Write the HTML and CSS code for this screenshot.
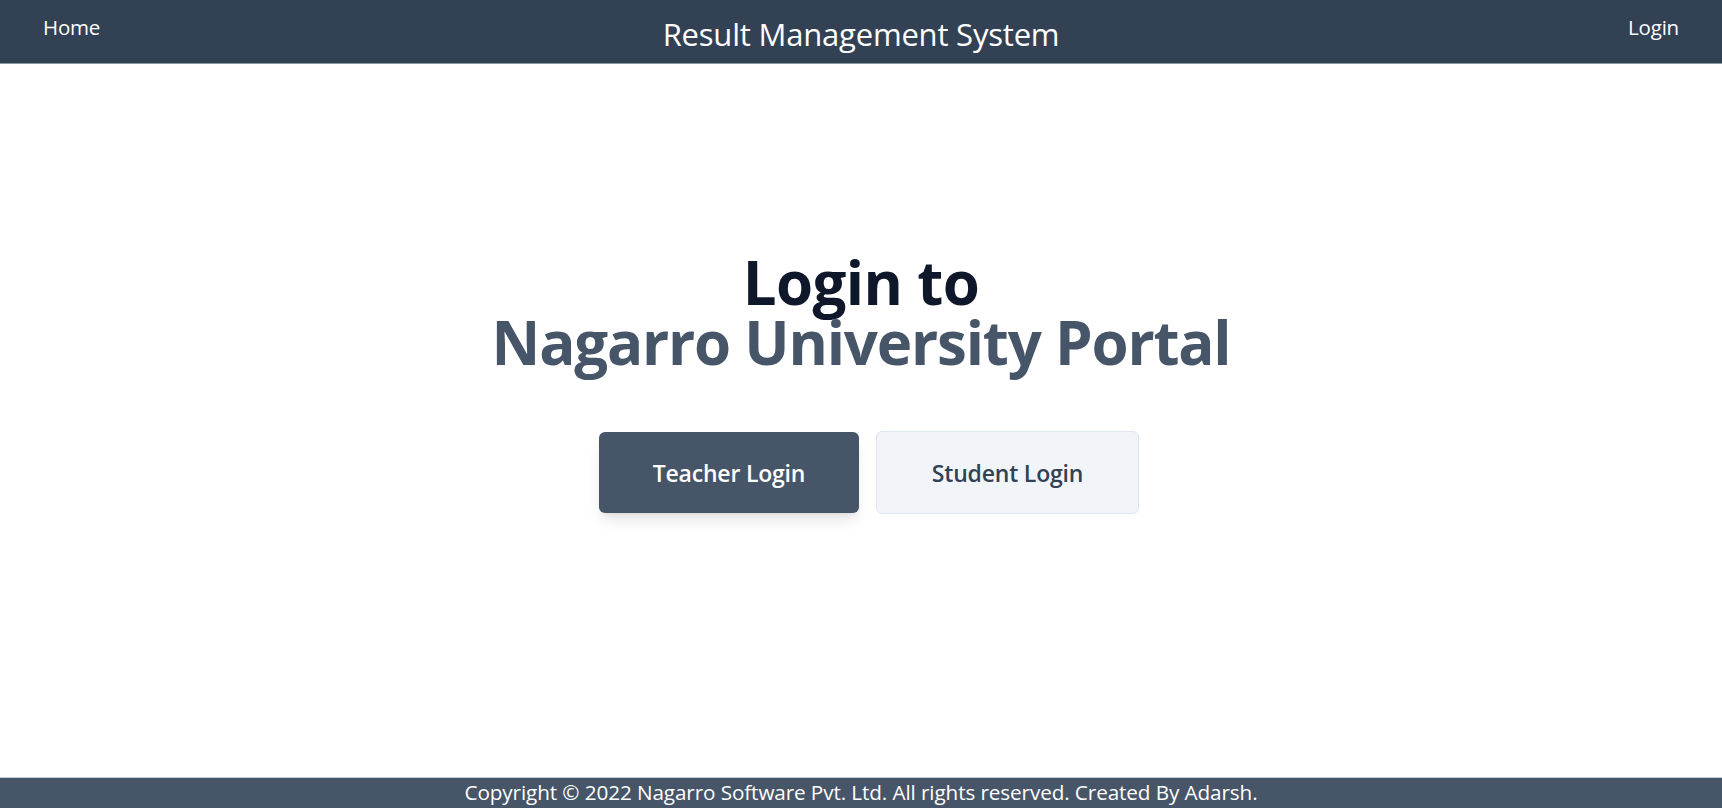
FILE: index.html
```html
<!DOCTYPE html>
<html lang="en">
<head>
<meta charset="utf-8">
<title>Result Management System</title>
<link rel="stylesheet" href="styles.css">
</head>
<body>
<div class="page">
  <header class="topbar">
    <a class="nav-link nav-left" href="#">Home</a>
    <div class="brand">Result Management System</div>
    <a class="nav-link nav-right" href="#">Login</a>
  </header>
  <main class="hero">
    <h1 class="hero-title">
      <span class="hero-line1">Login to</span>
      <span class="hero-line2">Nagarro University Portal</span>
    </h1>
    <div class="actions">
      <a class="btn btn-primary" href="#">Teacher Login</a>
      <a class="btn btn-secondary" href="#">Student Login</a>
    </div>
  </main>
  <footer class="footer">Copyright © 2022 Nagarro Software Pvt. Ltd. All rights reserved. Created By Adarsh.</footer>
</div>
</body>
</html>
```
FILE: styles.css
```css
* { box-sizing: border-box; }
html, body { margin: 0; padding: 0; height: 100%; }
body {
  font-family: "Open Sans", "Noto Sans", "Liberation Sans", sans-serif;
  background: #ffffff;
  overflow: hidden;
}
.page {
  height: 808px;
  display: flex;
  flex-direction: column;
}
.topbar {
  height: 64px;
  background: #334155;
  border-bottom: 1px solid #8b96a5;
  display: grid;
  grid-template-columns: 1fr auto 1fr;
  align-items: start;
  padding: 13px 43px 0 43px;
}
.nav-link {
  color: #ffffff;
  text-decoration: none;
  font-size: 20.5px;
  line-height: 28px;
  letter-spacing: -0.2px;
}
.nav-left { justify-self: start; }
.nav-right { justify-self: end; }
.brand {
  color: #ffffff;
  font-size: 31px;
  line-height: 38px;
  letter-spacing: -0.2px;
  padding-top: 2px;
}
.hero {
  flex: 1;
  display: flex;
  flex-direction: column;
  align-items: center;
  padding-top: 188px;
}
.hero-title {
  margin: 0;
  text-align: center;
  font-size: 60px;
  line-height: 60px;
  font-weight: 700;
  letter-spacing: -1.2px;
}
.hero-line1 { display: block; color: #0f172a; letter-spacing: -0.6px; }
.hero-line2 { display: block; color: #475569; }
.actions {
  display: flex;
  gap: 17px;
  margin-top: 59px;
  padding-left: 16px;
}
.btn {
  display: flex;
  align-items: center;
  justify-content: center;
  text-decoration: none;
  font-size: 23px;
  font-weight: 600;
  border-radius: 6px;
  letter-spacing: -0.2px;
}
.btn-primary {
  width: 260px;
  height: 81px;
  margin-top: 1px;
  background: #475569;
  color: #ffffff;
  box-shadow: 0 10px 15px -3px rgba(0,0,0,0.1), 0 4px 6px -4px rgba(0,0,0,0.1);
}
.btn-secondary {
  width: 263px;
  height: 83px;
  background: #f1f5f9;
  color: #334155;
  border: 1px solid #dfe5ee;
}
.footer {
  height: 31px;
  background: #475569;
  border-top: 1px solid #c5ced9;
  color: #ffffff;
  text-align: center;
  font-size: 20.7px;
  line-height: 28px;
  letter-spacing: -0.1px;
}
```
